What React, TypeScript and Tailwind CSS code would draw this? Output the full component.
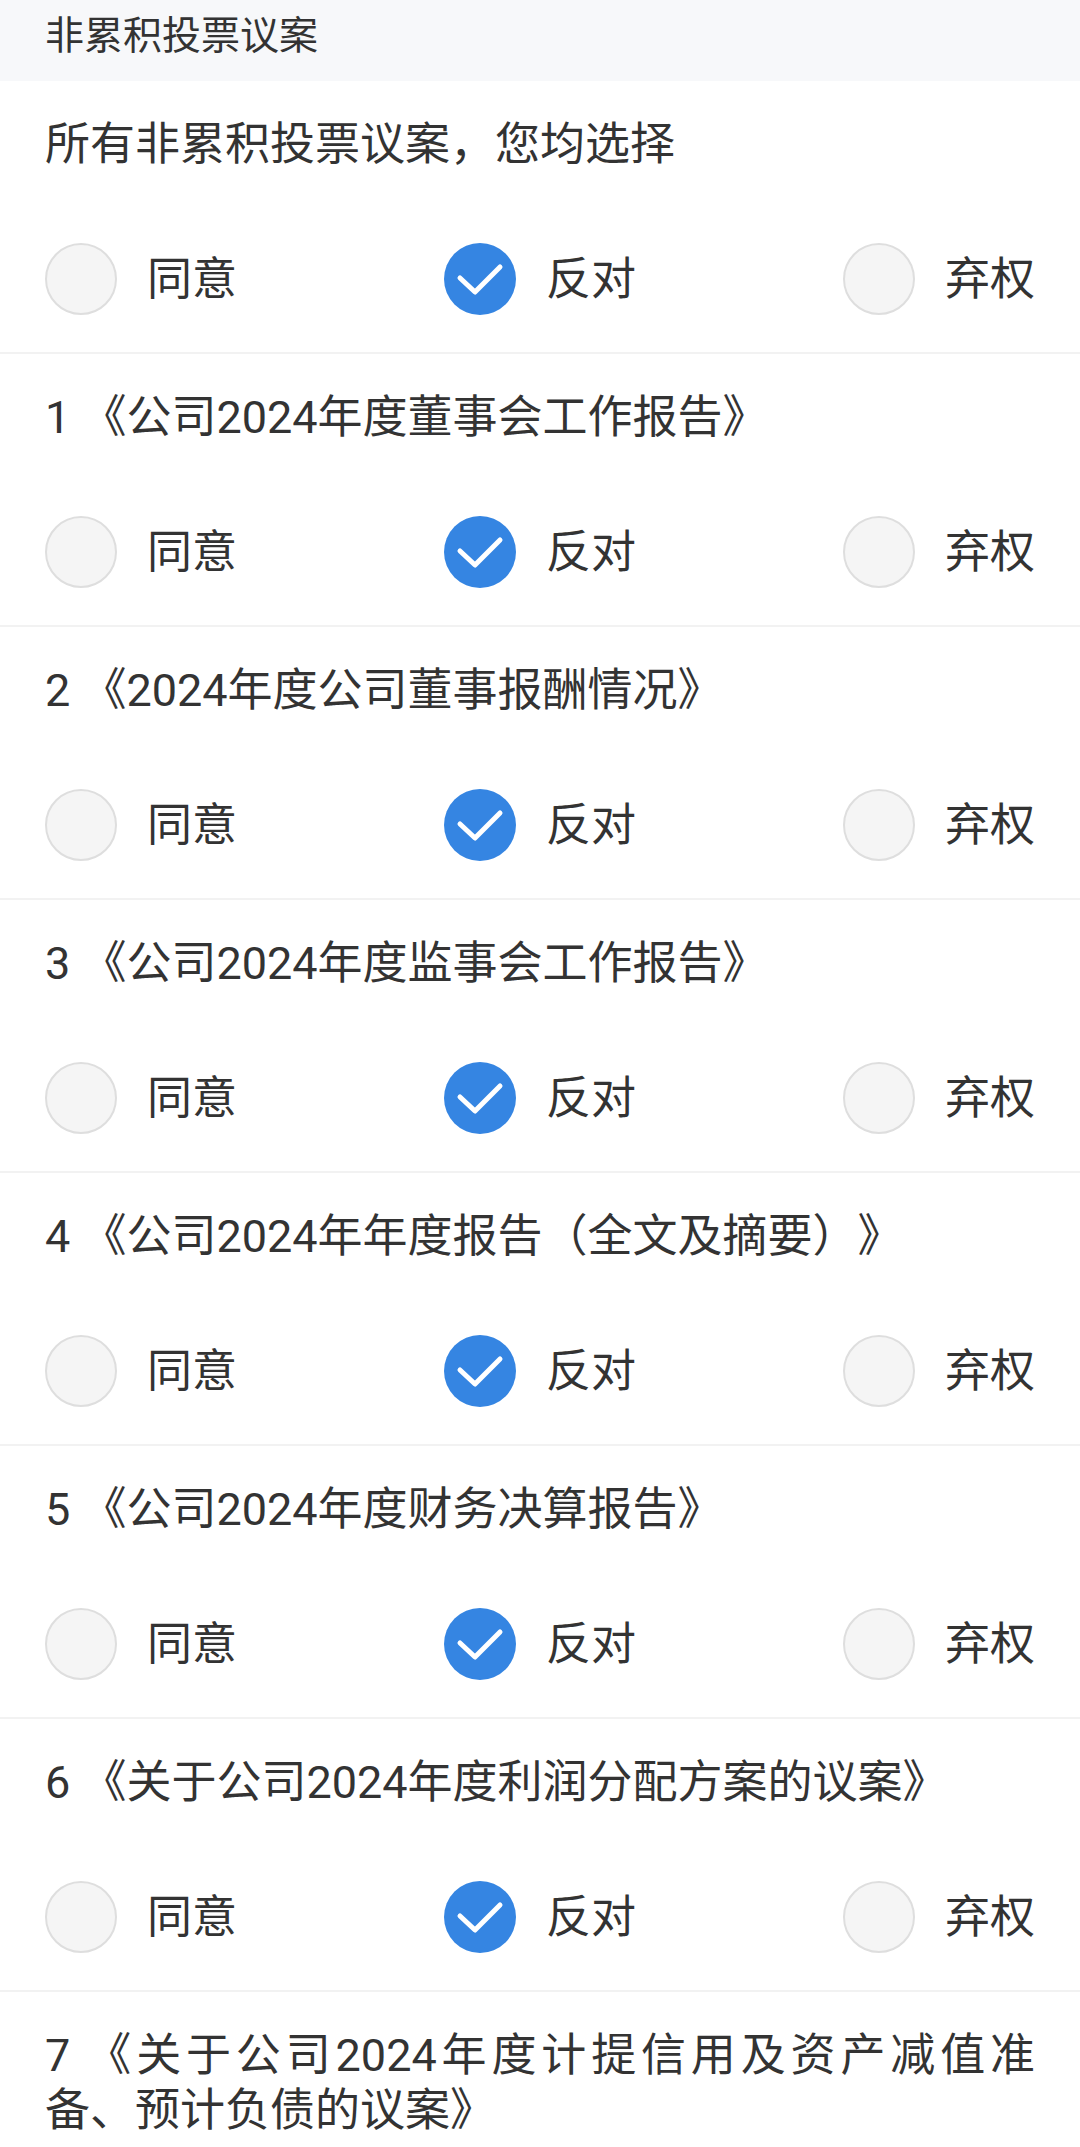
import { useState } from "react";

const OPTIONS = ["同意", "反对", "弃权"];

const PROPOSALS = [
  "所有非累积投票议案，您均选择",
  "1 《公司2024年度董事会工作报告》",
  "2 《2024年度公司董事报酬情况》",
  "3 《公司2024年度监事会工作报告》",
  "4 《公司2024年年度报告（全文及摘要）》",
  "5 《公司2024年度财务决算报告》",
  "6 《关于公司2024年度利润分配方案的议案》",
  "7 《关于公司2024年度计提信用及资产减值准备、预计负债的议案》",
];

function RadioDot({ checked }: { checked: boolean }) {
  if (checked) {
    return (
      <span className="flex h-[72px] w-[72px] shrink-0 items-center justify-center rounded-full bg-[#3585e2]">
        <svg width="72" height="72" viewBox="0 0 72 72" fill="none">
          <polyline
            points="16,35 31,49 56,24"
            stroke="#ffffff"
            strokeWidth="5"
            strokeLinecap="round"
            strokeLinejoin="round"
          />
        </svg>
      </span>
    );
  }
  return (
    <span className="h-[72px] w-[72px] shrink-0 rounded-full border-[2.5px] border-[#dedede] bg-[#f5f5f5]" />
  );
}

function VoteRow({ title }: { title: string }) {
  const [choice, setChoice] = useState(1);

  return (
    <div className="border-b-2 border-[#f2f2f2] px-[45px] pb-[37px] pt-[36px]">
      <p className="text-justify text-[45px] leading-[55px] text-[#333333] [text-spacing-trim:space-all]">
        {title}
      </p>
      <div className="mt-[71px] flex items-center justify-between">
        {OPTIONS.map((opt, i) => (
          <button
            key={opt}
            type="button"
            onClick={() => setChoice(i)}
            className="flex items-center gap-[30px]"
          >
            <RadioDot checked={choice === i} />
            <span className="text-[45px] leading-[55px] text-[#333333]">{opt}</span>
          </button>
        ))}
      </div>
    </div>
  );
}

export default function App() {
  return (
    <div
      className="h-screen overflow-hidden bg-white"
      style={{ fontFamily: "Roboto, 'Noto Sans CJK SC', sans-serif" }}
    >
      <div className="h-[81px] bg-[#f7f8fa] px-[45px] pt-[14px]">
        <h2 className="text-[39px] leading-[44px] text-[#333333]">非累积投票议案</h2>
      </div>
      {PROPOSALS.map((t) => (
        <VoteRow key={t} title={t} />
      ))}
    </div>
  );
}
